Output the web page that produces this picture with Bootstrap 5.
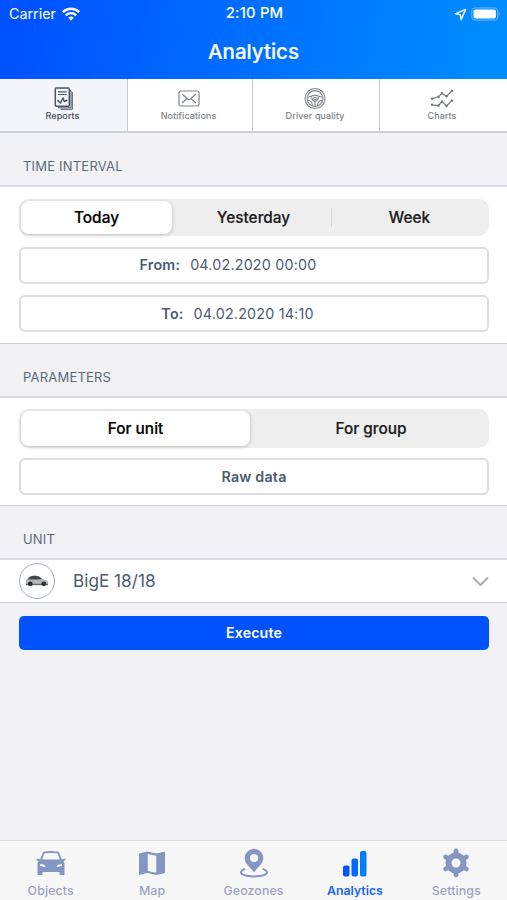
<!DOCTYPE html>
<html lang="en">
<head>
<meta charset="utf-8">
<meta name="viewport" content="width=device-width, initial-scale=1">
<title>Analytics</title>
<link href="https://cdn.jsdelivr.net/npm/bootstrap@5.3.0/dist/css/bootstrap.min.css" rel="stylesheet">
<style>
body{font-family:Inter,"Liberation Sans",sans-serif;background:#f1f1f6;color:#4c5d6e;height:900px;overflow:hidden;line-height:1.2}
svg{display:block;flex:none}
.app-head{height:79px;background:linear-gradient(100deg,#0052ff 5%,#008cff 95%);color:#fff}
.status{height:28px;font-size:14.3px;padding:0 7px 0 9px}
.status>div{flex:1 1 0}
.status .clock{font-weight:500;font-size:14.8px;letter-spacing:.2px}
.status .wifi{margin-left:2px}
.head-title{font-size:20.5px;font-weight:500;height:49px;-webkit-text-stroke:.2px}
.top-tabs{height:54px;border-bottom:2px solid #cfd1d9;background:#fff}
.top-tab{flex:0 0 127px;font-size:9px;letter-spacing:.15px;color:#7b7f85;border-right:1px solid #c6c9d2;padding:8px 2px 0 0;-webkit-text-stroke:.15px}
.top-tab.on{flex-basis:128px;background:#f3f5fa;color:#3f4c59}
.top-tab.notif{flex-basis:125px;padding-right:3px}
.top-tab:last-child{border-right:0;padding-right:3px;flex:1 1 0}
.top-tab svg{margin-bottom:1px}
.sec-title{height:54px;padding:26px 23px 0;font-size:13px;line-height:14px;border-bottom:2px solid #dadce3;letter-spacing:.2px;color:#5d6b79}
.panel{background:#fff;border-bottom:1px solid #cfd1d9;padding:12px 18px 11px 19px}
.panel.params{padding:11px 18px 10px 19px}
.seg{background:#eee;border-radius:10px;padding:2px;font-size:15.4px;font-weight:500;color:#1c1c1e;margin-bottom:11px;height:37px;-webkit-text-stroke:.2px}
.seg>div{flex:1 1 0;border-radius:8px;padding-top:2px}
.seg .on{background:#fff;color:#000;box-shadow:0 1px 4px rgba(0,0,0,.2);flex:0 0 151px}
.seg .mid{flex:0 0 159px;padding-left:4px}
.seg.two{height:39px;margin-bottom:10px}
.seg.two .on{flex-basis:229px}
.seg.two .other{padding-left:5px}
.split{width:1px;height:19px;background:#d8d8da}
.field{height:37px;border:2px solid #dcdddf;border-radius:6px;font-size:14.3px;letter-spacing:.2px}
.field.from{margin-bottom:11px;padding-right:52px;padding-bottom:1px}
.field.to{padding-right:33px}
.field b{font-weight:600;margin-right:10px}
.unit-row{height:43px;background:#fff;border-bottom:1px solid #cfd1d6;padding:0 18px 0 19px;font-size:17.2px}
.avatar{width:36px;height:36px;border:1.5px solid #a3aad0;margin-right:18px}
.run,.run:hover{height:34px;margin:13px 18px 0 19px;background:#0052ff;border-radius:5px;color:#fff;font-size:14.2px;font-weight:600;border:0;padding:0;letter-spacing:.15px}
.dock{height:60px;border-top:1px solid #dadadd;background:#f7f7f8;color:#9aa4c2;font-size:12.3px;font-weight:500;letter-spacing:.15px}
.dock>div{flex:1 1 0;padding-top:7px}
.dock svg{margin-bottom:6px}
.dock .on{color:#1764f5;font-weight:600;letter-spacing:0}
</style>
</head>
<body class="d-flex flex-column">
<header class="app-head">
  <div class="status d-flex align-items-center">
    <div class="d-flex align-items-center"><span class="me-1">Carrier</span>
      <svg class="wifi" width="18" height="14" viewBox="0 0 18 14" fill="none" stroke="#fff" stroke-width="2.4"><path d="M.9 5.1a11.500 11.500 0 0 1 16.200 0M3.800 8.300a7.400 7.400 0 0 1 10.400 0"/><path d="M9 13.700 6.200 10.800a4 4 0 0 1 5.600 0z" fill="#fff" stroke="none"/></svg>
    </div>
    <div class="clock text-center">2:10 PM</div>
    <div class="d-flex justify-content-end align-items-center gap-1">
      <svg width="13" height="13" viewBox="0 0 13 13" fill="none" stroke="#fff" stroke-width="1.4" stroke-linejoin="round"><path d="M11.6 1.4 1.3 5.8l5 .8.8 5z"/></svg>
      <svg width="29" height="14" viewBox="0 0 29 14"><rect x=".7" y=".8" width="26" height="12.400" rx="3.600" fill="none" stroke="#5eacff" stroke-width="1.200"/><rect x="2.500" y="2.600" width="22.400" height="8.800" rx="2" fill="#fff"/><path d="M27.500 4.800c1.800.8 1.800 3.600 0 4.400z" fill="#5eacff"/></svg>
    </div>
  </div>
  <div class="head-title d-flex align-items-center justify-content-center">Analytics</div>
</header>

<nav class="top-tabs d-flex">
  <div class="top-tab on d-flex flex-column align-items-center">
    <svg width="22" height="23" viewBox="0 0 22 23" fill="none" stroke="#4a5966" stroke-width="1.500" stroke-linejoin="round"><path d="M17.500 3.500h1.500v17.300H6.500v-1.500M20.300 5v17.300H8.500" stroke-width="1"/><rect x="3.300" y="1" width="14" height="18.300" rx="1"/><path d="M6 4.800h8.700M6 7.500h8.700" stroke-width="1.200"/><path d="m5.500 13 3 3 2.500-5 1.300 3.500 3-1.500"/></svg>
    <span>Reports</span></div>
  <div class="top-tab notif d-flex flex-column align-items-center">
    <svg width="22" height="23" viewBox="0 0 22 23" fill="none" stroke="#7f848b" stroke-width="1.200" stroke-linecap="round"><rect x="1" y="4" width="20" height="15" rx="1.500"/><path d="M4.500 7.500 10 12.300q1 .8 2 0l5.500-4.800M4.500 15.500l4-3.500M17.500 15.500l-4-3.500"/></svg>
    <span>Notifications</span></div>
  <div class="top-tab d-flex flex-column align-items-center">
    <svg width="22" height="23" viewBox="0 0 22 23" fill="none" stroke="#7f848b" stroke-width="1.100"><circle cx="11" cy="11.500" r="10"/><circle cx="11" cy="11.500" r="7.900"/><circle cx="11" cy="11.500" r="1.300"/><path d="M3.300 10.200c4 0 4.500-2 7.700-2s3.700 2 7.700 2M3.400 13.300c3.400 0 4.800 1.500 5.100 5.500M18.600 13.300c-3.400 0-4.800 1.500-5.100 5.500M7.800 9.500q-.4 4 3.200 4.900 3.600-.9 3.200-4.900M11 14.400v4.900"/></svg>
    <span>Driver quality</span></div>
  <div class="top-tab d-flex flex-column align-items-center">
    <svg width="24" height="23" viewBox="0 0 24 23" fill="none" stroke="#747980" stroke-width="1.200"><path d="m2 11.800 6.500-2 3.500-3.500 4.500 3L22 4M2 17.800l6.500.7 3.500-4 4.500 4.500 5.500-5.500"/><g fill="#747980" stroke="none"><circle cx="2" cy="11.800" r="1.200"/><circle cx="8.500" cy="9.800" r="1.200"/><circle cx="12" cy="6.300" r="1.200"/><circle cx="16.500" cy="9.300" r="1.200"/><circle cx="22" cy="4" r="1.200"/><circle cx="2" cy="17.800" r="1.200"/><circle cx="8.500" cy="18.500" r="1.200"/><circle cx="12" cy="14.500" r="1.200"/><circle cx="16.500" cy="19" r="1.200"/><circle cx="22" cy="13.500" r="1.200"/></g></svg>
    <span>Charts</span></div>
</nav>

<div class="sec-title">TIME INTERVAL</div>
<section class="panel">
  <div class="seg d-flex align-items-center">
    <div class="on h-100 d-flex align-items-center justify-content-center">Today</div>
    <div class="mid h-100 d-flex align-items-center justify-content-center">Yesterday</div>
    <span class="split"></span>
    <div class="h-100 d-flex align-items-center justify-content-center">Week</div>
  </div>
  <div class="field from d-flex align-items-center justify-content-center"><b>From:</b>04.02.2020 00:00</div>
  <div class="field to d-flex align-items-center justify-content-center"><b>To:</b>04.02.2020 14:10</div>
</section>

<div class="sec-title">PARAMETERS</div>
<section class="panel params">
  <div class="seg two d-flex">
    <div class="on d-flex align-items-center justify-content-center">For unit</div>
    <div class="other d-flex align-items-center justify-content-center">For group</div>
  </div>
  <div class="field d-flex align-items-center justify-content-center fw-semibold">Raw data</div>
</section>

<div class="sec-title">UNIT</div>
<section class="unit-row d-flex align-items-center">
  <div class="avatar rounded-circle d-flex align-items-center justify-content-center">
    <svg width="24" height="12" viewBox="0 0 24 12"><path d="M.8 9V5L4.500 1.500Q9-.2 14 1.300l4 3 4.300 1.200q1.200 1.500.9 4H2z" fill="#b4b6b9"/><path d="M2.500 4.500 5 1.700Q9.500 0 14 1.600l3 2.600L9 4.600z" fill="#45484b"/><path d="M1 8.800h22v1.400H1z" fill="#66696c"/><circle cx="5.300" cy="8.800" r="2.400" fill="#2c2e30"/><circle cx="18.800" cy="8.800" r="2.400" fill="#2c2e30"/></svg>
  </div>
  <span class="me-auto">BigE 18/18</span>
  <svg width="17" height="11" viewBox="0 0 17 11" fill="none" stroke="#a9acb1" stroke-width="2"><path d="m1 1.500 7.500 7.500L16 1.500"/></svg>
</section>

<button class="btn run" type="button">Execute</button>

<footer class="dock d-flex mt-auto">
  <div class="d-flex flex-column align-items-center">
    <svg width="30" height="30" viewBox="0 0 30 30" fill="#8497c4"><path fill-rule="evenodd" d="M8.500 3.500Q15 2.500 21.500 3.500q1.500.2 2 1.700l2.300 6 3.700-.7v1.700l-2 .8 1 2.500V27h-5v-3H6.500v3h-5V15.500l1-2.500-2-.8v-1.700l3.700.7 2.300-6q.5-1.500 2-1.700zM9 5.300q-.7.100-1 .9L6.300 11.500h17.400L22 6.200q-.3-.8-1-.9-6-.8-12 0zM4 16v2l4.800 1q1 0 .7-1-1.500-2-5.500-2zM26 16v2l-4.800 1q-1 0-.7-1 1.500-2 5.500-2z"/></svg>
    <span>Objects</span></div>
  <div class="d-flex flex-column align-items-center">
    <svg width="30" height="30" viewBox="0 0 30 30" fill="#8497c4"><path fill-rule="evenodd" d="m2 5.500 8.500-2 9 2L28 3.500v21.500l-8.500 2-9-2-8.500 2zM10.800 6v17l8.400 1.800v-17z"/></svg>
    <span>Map</span></div>
  <div class="d-flex flex-column align-items-center">
    <svg width="30" height="30" viewBox="0 0 30 30" fill="#8497c4"><path fill-rule="evenodd" d="M15 .8a9.300 9.300 0 0 1 9.300 9.300c0 6-5.500 8.900-9.300 14.400-3.800-5.500-9.300-8.400-9.300-14.400A9.300 9.300 0 0 1 15 .8zM15 6a4.100 4.100 0 1 0 0 8.200A4.100 4.100 0 0 0 15 6z"/><path d="M5.500 21.200C-2.500 24.700 4 28.400 15 28.400s17.500-3.700 9.500-7.200" fill="none" stroke="#8497c4" stroke-width="2" stroke-linecap="round"/></svg>
    <span>Geozones</span></div>
  <div class="on d-flex flex-column align-items-center">
    <svg width="30" height="30" viewBox="0 0 30 30"><rect x="3" y="17.500" width="6.500" height="11" rx="2" fill="#0054ff"/><rect x="11.500" y="10.500" width="6.500" height="18" rx="2" fill="#0069ff"/><rect x="20" y="3" width="6.500" height="25.500" rx="2" fill="#007cff"/></svg>
    <span>Analytics</span></div>
  <div class="d-flex flex-column align-items-center">
    <svg width="30" height="30" viewBox="0 0 30 30"><g fill="none" stroke="#8497c4"><circle cx="15" cy="15" r="7.500" stroke-width="6"/><path d="M15 3v3M15 24v3M4.600 9l2.600 1.500M22.800 19.500l2.600 1.500M4.600 21l2.600-1.500M22.800 10.500 25.400 9" stroke-width="4.800" stroke-linecap="round"/></g></svg>
    <span>Settings</span></div>
</footer>
<script src="https://cdn.jsdelivr.net/npm/bootstrap@5.3.0/dist/js/bootstrap.bundle.min.js"></script>
</body>
</html>
